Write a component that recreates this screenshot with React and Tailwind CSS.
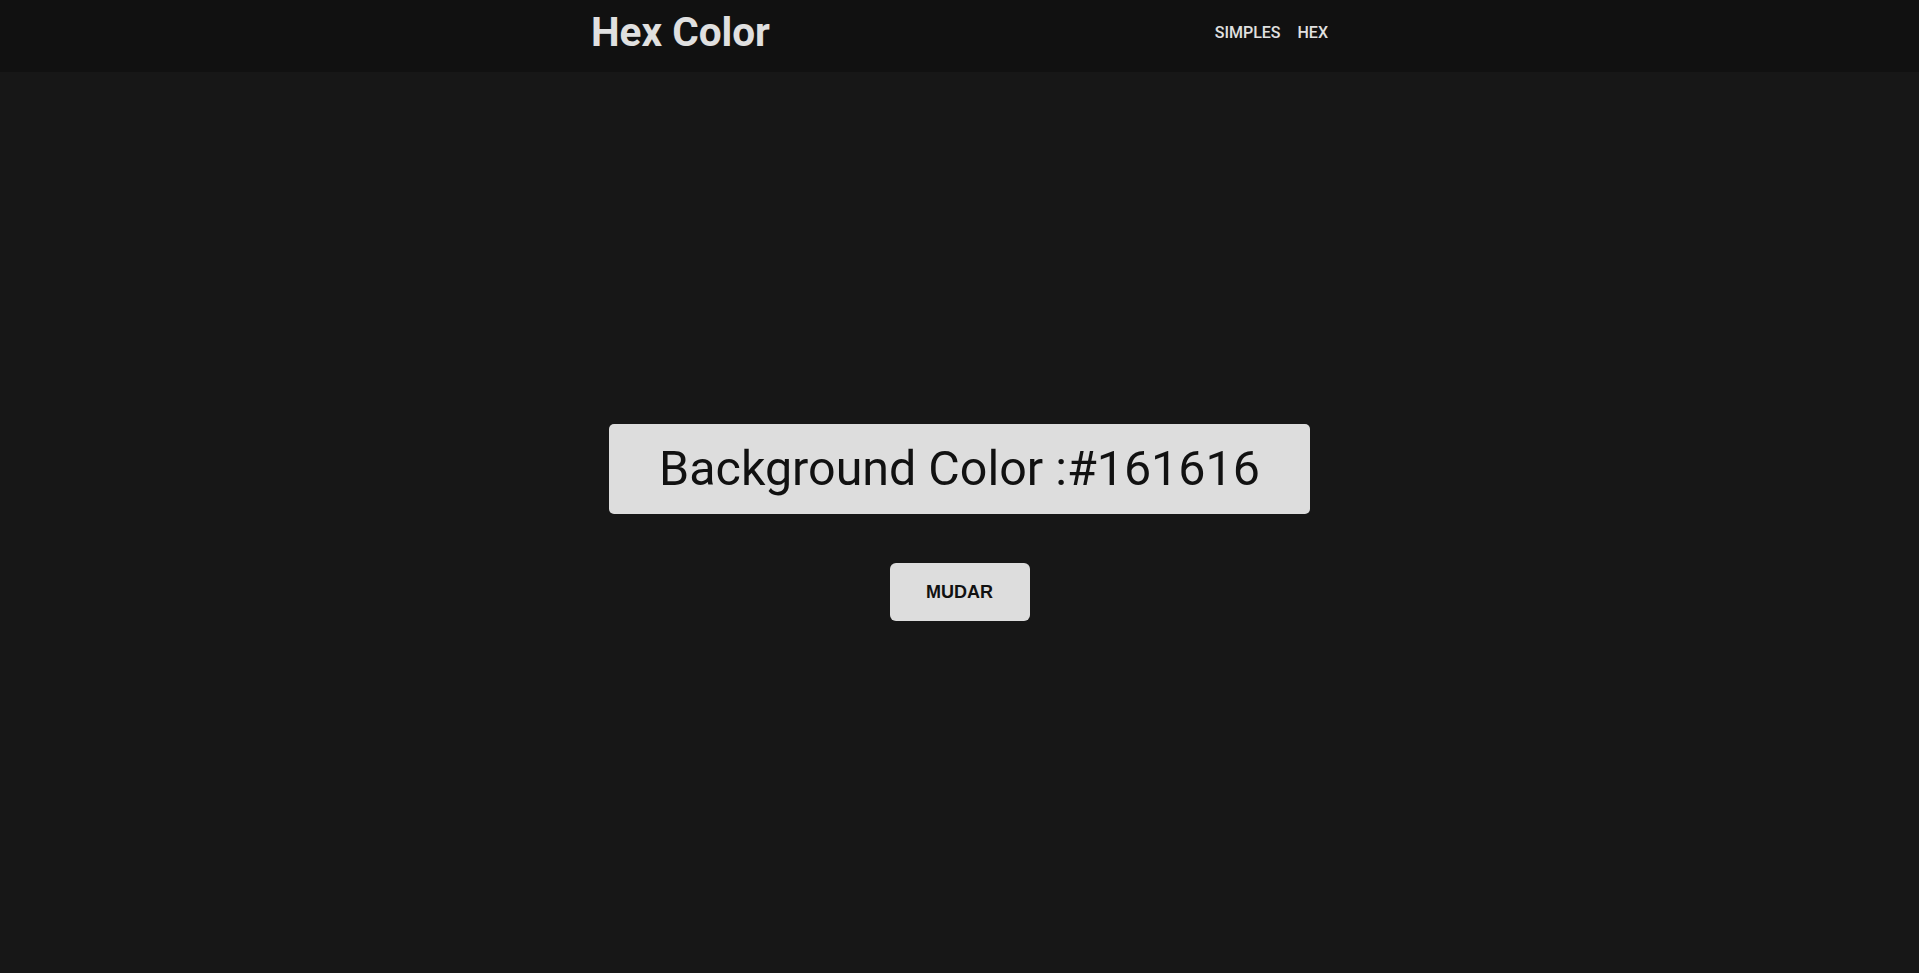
export default function App() {
  return (
    <div className="min-h-screen flex flex-col bg-[#171717]" style={{ fontFamily: "Roboto, 'Liberation Sans', sans-serif" }}>
      <header className="h-[72px] bg-[#111111] shrink-0 pb-[7px]">
        <div className="w-[737px] mx-auto h-full flex items-center justify-between">
          <h1 className="text-[40.5px] font-bold text-[#e0e0e0] leading-none">Hex Color</h1>
          <nav className="flex gap-[17px] text-[16px] text-[#e0e0e0] font-medium">
            <span>SIMPLES</span>
            <span>HEX</span>
          </nav>
        </div>
      </header>
      <main className="flex-1 flex flex-col items-center justify-center">
        <div className="bg-[#dddddd] rounded-[5px] px-[50px] py-[20px] text-[48.4px] leading-[50px] text-[#111111]">
          Background Color :#161616
        </div>
        <button
          className="mt-[49px] w-[140px] h-[58px] bg-[#dddddd] rounded-[6px] text-[18px] font-bold text-[#111111]"
          style={{ fontFamily: "'Liberation Sans', Arial, sans-serif" }}
        >
          MUDAR
        </button>
      </main>
    </div>
  );
}
